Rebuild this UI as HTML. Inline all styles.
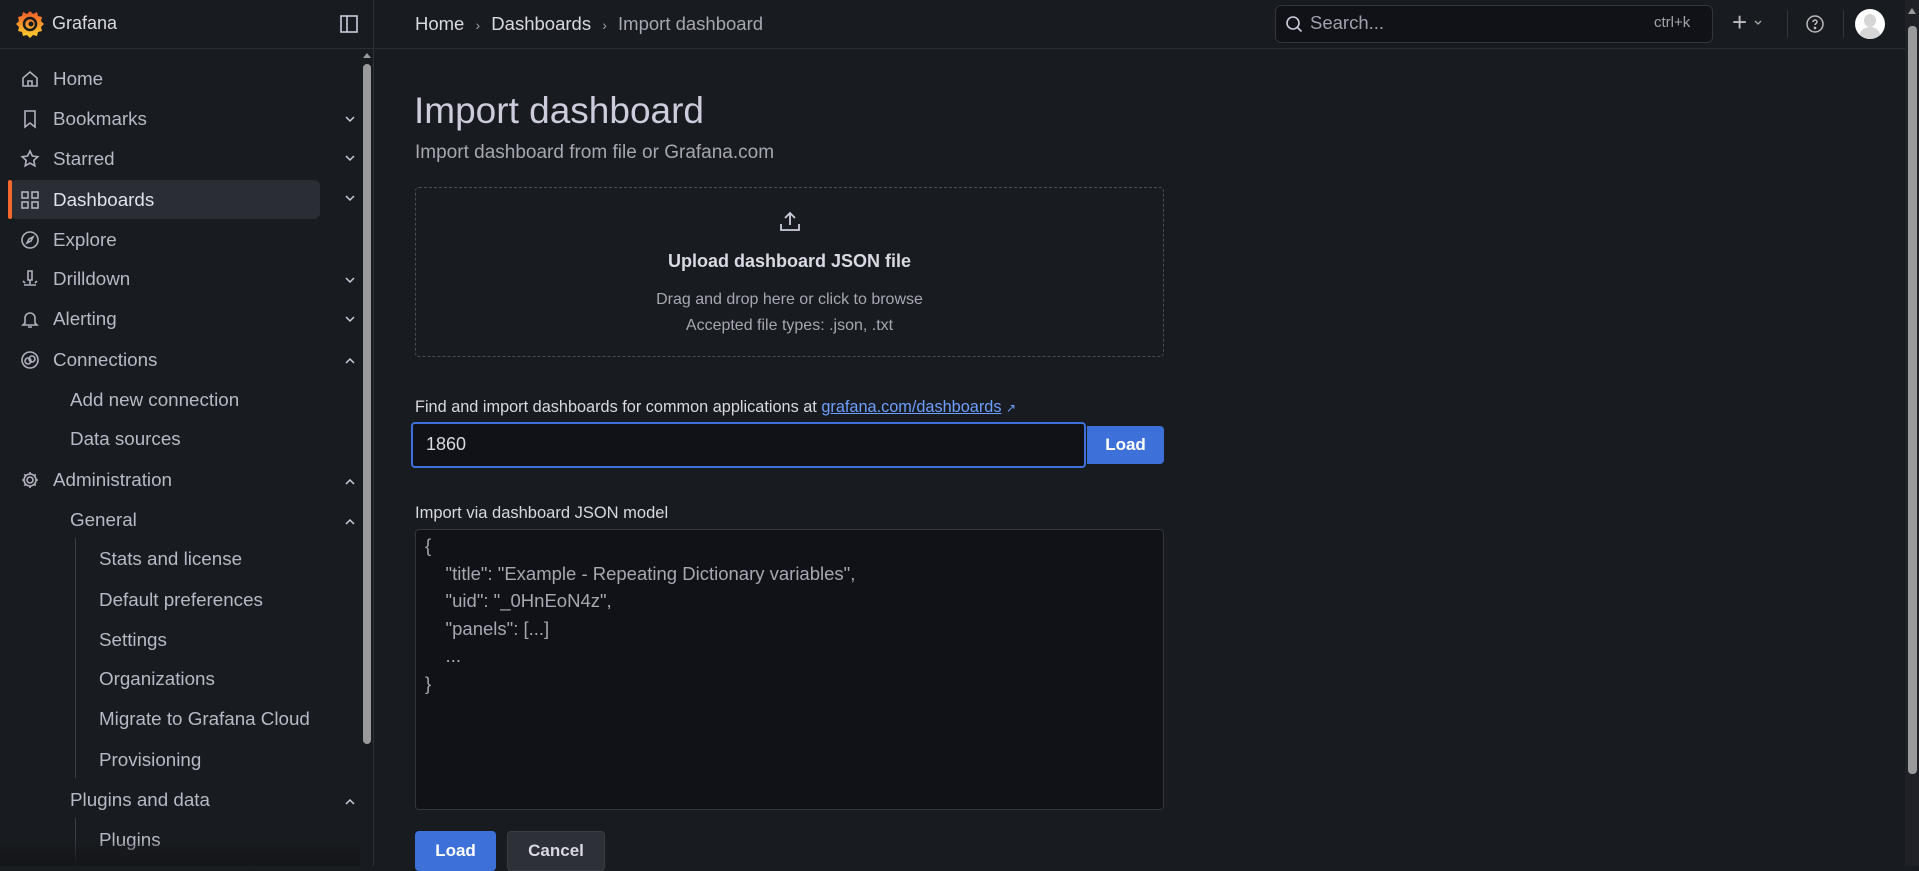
<!DOCTYPE html>
<html><head><meta charset="utf-8"><style>
*{box-sizing:border-box;margin:0;padding:0}
body{width:1919px;height:866px;overflow:hidden;background:#181b1f;font-family:"Liberation Sans",sans-serif;color:#ccccdc;position:relative}
.abs{position:absolute}
.top{left:0;top:0;width:1905px;height:49px;border-bottom:1px solid #2c2f35}
.side{left:0;top:0;width:374px;height:866px;border-right:1px solid #2c2f35}
.nav{position:absolute;left:0;height:40px;display:flex;align-items:center;font-size:18.8px;color:#b8b9c6;width:320px}
.nav svg{position:absolute;left:20px;width:20px;height:20px;fill:none;stroke:#b0b1bd;stroke-width:1.6}
.nav span{position:absolute;top:9px}
.btn{position:absolute;background:#3d71d9;color:#fff;font-weight:bold;font-size:17px;display:flex;align-items:center;justify-content:center;border-radius:4px}
</style></head><body>
<div class="abs side"></div>
<div class="abs top"></div>
<svg class="abs" style="left:15px;top:9px" width="30" height="30" viewBox="0 0 30 30"><defs><linearGradient id="g" x1="0" y1="1" x2="0" y2="0"><stop offset="0" stop-color="#fcd22e"/><stop offset="1" stop-color="#f05a28"/></linearGradient></defs><path d="M15 2l3 3 4-2 1 4 4 1-1 4 3 3-3 3 1 4-4 1-1 4-4-1-3 3-3-3-4 1-1-4-4-1 1-4-3-3 3-3-1-4 4-1 1-4 4 2z" fill="url(#g)"/><circle cx="15" cy="15" r="6" fill="none" stroke="#181b1f" stroke-width="2.5"/><circle cx="16" cy="15" r="2.5" fill="#181b1f"/></svg>
<div class="abs" style="left:52px;top:13px;font-size:18px;color:#d8d9e3">Grafana</div>
<svg class="abs" style="left:340px;top:15px" width="18" height="18" viewBox="0 0 18 18" fill="none" stroke="#ccccdc" stroke-width="1.6"><rect x="1" y="1" width="16" height="16"/><line x1="7" y1="1" x2="7" y2="17"/></svg>
<div class="abs" style="left:363px;top:64px;width:8px;height:680px;background:#9a9a9a;border-radius:4px"></div>
<div class="abs" style="left:363px;top:53px;width:0;height:0;border-left:4px solid transparent;border-right:4px solid transparent;border-bottom:5px solid #9a9a9a"></div>

<div class="abs" style="left:10px;top:180px;width:310px;height:39px;background:#2a2d33;border-radius:6px"></div>
<div class="abs" style="left:8px;top:180px;width:4px;height:39px;background:#f46a2c;border-radius:2px"></div>

<div class="nav" style="top:59px"><svg viewBox="0 0 20 20"><path d="M3 9l7-6 7 6v8H3z M8 17v-5h4v5"/></svg><span style="left:53px">Home</span></div>
<div class="nav" style="top:99px"><svg viewBox="0 0 20 20"><path d="M5 2h10v16l-5-4-5 4z"/></svg><span style="left:53px">Bookmarks</span></div>
<div class="nav" style="top:139px"><svg viewBox="0 0 20 20"><path d="M10 2l2.4 5 5.4.7-4 3.7 1 5.4L10 14l-4.8 2.8 1-5.4-4-3.7 5.4-.7z"/></svg><span style="left:53px">Starred</span></div>
<div class="nav" style="top:180px;color:#e0e1ea"><svg viewBox="0 0 20 20"><rect x="2" y="2" width="6" height="6"/><rect x="12" y="2" width="6" height="6"/><rect x="2" y="12" width="6" height="6"/><rect x="12" y="12" width="6" height="6"/></svg><span style="left:53px">Dashboards</span></div>
<div class="nav" style="top:220px"><svg viewBox="0 0 20 20"><circle cx="10" cy="10" r="8"/><path d="M13 7l-2 4-4 2 2-4z"/></svg><span style="left:53px">Explore</span></div>
<div class="nav" style="top:259px"><svg viewBox="0 0 20 20"><path d="M8 2h4v9H8z M10 11v4 M4 16h12 M3 12l2 2 M17 12l-2 2"/></svg><span style="left:53px">Drilldown</span></div>
<div class="nav" style="top:299px"><svg viewBox="0 0 20 20"><path d="M5 14V9a5 5 0 0110 0v5l2 2H3z M8 18h4"/></svg><span style="left:53px">Alerting</span></div>
<div class="nav" style="top:340px"><svg viewBox="0 0 20 20"><circle cx="10" cy="10" r="8"/><circle cx="8" cy="11" r="3"/><circle cx="12" cy="9" r="3"/></svg><span style="left:53px">Connections</span></div>
<div class="nav" style="top:380px"><span style="left:70px">Add new connection</span></div>
<div class="nav" style="top:419px"><span style="left:70px">Data sources</span></div>
<div class="nav" style="top:460px"><svg viewBox="0 0 20 20"><circle cx="10" cy="10" r="3"/><path d="M10 2v2M10 16v2M2 10h2M16 10h2M4.3 4.3l1.5 1.5M14.2 14.2l1.5 1.5M4.3 15.7l1.5-1.5M14.2 5.8l1.5-1.5"/><circle cx="10" cy="10" r="6"/></svg><span style="left:53px">Administration</span></div>
<div class="nav" style="top:500px"><span style="left:70px">General</span></div>
<div class="abs" style="left:75px;top:538px;width:1px;height:240px;background:#3a3d44"></div>
<div class="nav" style="top:539px"><span style="left:99px">Stats and license</span></div>
<div class="nav" style="top:580px"><span style="left:99px">Default preferences</span></div>
<div class="nav" style="top:620px"><span style="left:99px">Settings</span></div>
<div class="nav" style="top:659px"><span style="left:99px">Organizations</span></div>
<div class="nav" style="top:699px"><span style="left:99px">Migrate to Grafana Cloud</span></div>
<div class="nav" style="top:740px"><span style="left:99px">Provisioning</span></div>
<div class="nav" style="top:780px"><span style="left:70px">Plugins and data</span></div>
<div class="abs" style="left:75px;top:818px;width:1px;height:48px;background:#3a3d44"></div>
<div class="nav" style="top:820px"><span style="left:99px">Plugins</span></div>
<div class="abs" style="left:0;top:840px;width:360px;height:26px;background:linear-gradient(rgba(24,27,31,0),#131519)"></div>

<svg class="abs" style="left:344px;top:115px" width="12" height="310" viewBox="0 0 12 310" fill="none" stroke="#ccccdc" stroke-width="1.5">
<path d="M2 2l4 4 4-4"/><path d="M2 41l4 4 4-4"/><path d="M2 81l4 4 4-4"/><path d="M2 163l4 4 4-4"/><path d="M2 202l4 4 4-4"/><path d="M2 248l4-4 4 4"/></svg>
<svg class="abs" style="left:344px;top:479px" width="12" height="330" viewBox="0 0 12 330" fill="none" stroke="#ccccdc" stroke-width="1.5">
<path d="M2 5l4-4 4 4"/><path d="M2 45l4-4 4 4"/><path d="M2 325l4-4 4 4"/></svg>

<div class="abs" style="left:415px;top:13px;font-size:18.5px;color:#d8d9e3">Home <span style="color:#9fa0ad;margin:0 6px;font-size:14px">›</span> Dashboards <span style="color:#9fa0ad;margin:0 6px;font-size:14px">›</span> <span style="color:#a6a7b2">Import dashboard</span></div>
<div class="abs" style="left:1275px;top:5px;width:438px;height:38px;border:1px solid #33363c;border-radius:6px;background:#111217"></div>
<svg class="abs" style="left:1285px;top:15px" width="18" height="18" viewBox="0 0 18 18" fill="none" stroke="#ccccdc" stroke-width="1.6"><circle cx="8" cy="8" r="6"/><path d="M12.5 12.5l4 4"/></svg>
<div class="abs" style="left:1310px;top:12px;font-size:18.5px;color:#9fa0ad">Search...</div>
<div class="abs" style="left:1654px;top:14px;font-size:15px;color:#a0a1ad">ctrl+k</div>
<div class="abs" style="left:1732px;top:7px;font-size:26px;color:#bbbcc6;font-weight:300">+</div>
<svg class="abs" style="left:1754px;top:20px" width="8" height="6" viewBox="0 0 8 6" fill="none" stroke="#aaa" stroke-width="1.3"><path d="M1 1l3 3 3-3"/></svg>
<div class="abs" style="left:1787px;top:10px;width:1px;height:28px;background:#33363c"></div>
<svg class="abs" style="left:1805px;top:14px" width="20" height="20" viewBox="0 0 20 20" fill="none" stroke="#bbb" stroke-width="1.5"><circle cx="10" cy="10" r="8"/><path d="M8 8a2 2 0 114 0c0 1.5-2 1.5-2 3"/><circle cx="10" cy="14" r=".6" fill="#bbb"/></svg>
<div class="abs" style="left:1843px;top:10px;width:1px;height:28px;background:#33363c"></div>
<div class="abs" style="left:1855px;top:9px;width:30px;height:30px;border-radius:50%;background:#fff;overflow:hidden"><div style="position:absolute;left:9px;top:5px;width:12px;height:13px;border-radius:50%;background:#d6d6d6"></div><div style="position:absolute;left:5px;top:18px;width:20px;height:16px;border-radius:50%;background:#d6d6d6"></div></div>
<div class="abs" style="left:1905px;top:0;width:14px;height:866px;background:#1f2126"></div>
<div class="abs" style="left:1908px;top:26px;width:9px;height:748px;background:#9a9a9a;border-radius:4px"></div>
<div class="abs" style="left:1908px;top:8px;border-left:4px solid transparent;border-right:4px solid transparent;border-bottom:6px solid #9a9a9a"></div>

<div class="abs" style="left:414px;top:90px;font-size:37px;color:#ccccdc">Import dashboard</div>
<div class="abs" style="left:415px;top:142px;font-size:19px;color:#a6a7b2">Import dashboard from file or Grafana.com</div>
<div class="abs" style="left:415px;top:187px;width:749px;height:170px;border:1px dashed #4a4d55;border-radius:4px"></div>
<svg class="abs" style="left:778px;top:210px" width="24" height="24" viewBox="0 0 24 24" fill="none" stroke="#ccccdc" stroke-width="1.8"><path d="M12 15V3M7 8l5-5 5 5M3 14v6h18v-6"/></svg>
<div class="abs" style="left:415px;top:251px;width:749px;text-align:center;font-size:18px;font-weight:bold;color:#d8d9e3">Upload dashboard JSON file</div>
<div class="abs" style="left:415px;top:287px;width:749px;text-align:center;font-size:16px;color:#a6a7b2;line-height:26px">Drag and drop here or click to browse<br>Accepted file types: .json, .txt</div>

<div class="abs" style="left:415px;top:398px;font-size:16.3px;color:#d8d9e3">Find and import dashboards for common applications at <span style="color:#6e9fff;text-decoration:underline">grafana.com/dashboards</span> <span style="color:#6e9fff;font-size:12px">↗</span></div>
<div class="abs" style="left:411px;top:422px;width:675px;height:46px;border:2px solid #3d71d9;border-radius:4px;background:#111217"></div>
<div class="abs" style="left:426px;top:434px;font-size:18px;color:#d8d9e3">1860</div>
<div class="btn" style="left:1087px;top:426px;width:77px;height:38px;border-radius:0 4px 4px 0">Load</div>

<div class="abs" style="left:415px;top:504px;font-size:16.5px;color:#d8d9e3">Import via dashboard JSON model</div>
<div class="abs" style="left:415px;top:529px;width:749px;height:281px;border:1px solid #33363c;border-radius:4px;background:#111217"></div>
<div class="abs" style="left:425px;top:532px;font-size:18.5px;line-height:27.5px;color:#a6a7b2;white-space:pre">{
    "title": "Example - Repeating Dictionary variables",
    "uid": "_0HnEoN4z",
    "panels": [...]
    ...
}</div>
<div class="btn" style="left:415px;top:831px;width:81px;height:40px">Load</div>
<div class="btn" style="left:507px;top:831px;width:98px;height:40px;background:#2d3036;color:#d8d9e3;border:1px solid #3a3d44">Cancel</div>
</body></html>
